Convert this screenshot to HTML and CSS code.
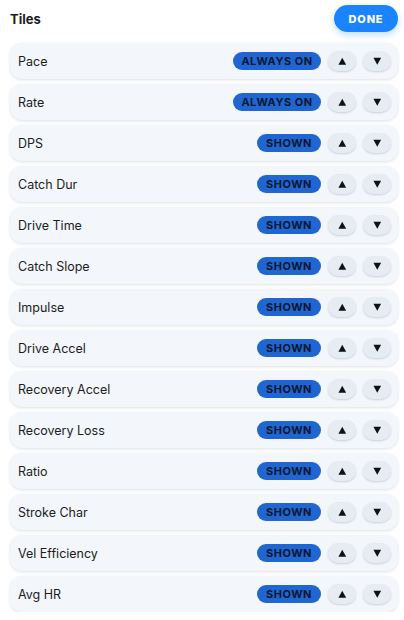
FILE: index.html
```html
<!DOCTYPE html>
<html>
<head>
<meta charset="utf-8">
<link rel="stylesheet" href="styles.css">
</head>
<body>
<div class="panel">
  <div class="header">
    <div class="title">Tiles</div>
    <button class="done">DONE</button>
  </div>
  <div class="list">
    <div class="row"><span class="name">Pace</span><span class="pill">ALWAYS ON</span><button class="btn"><svg viewBox="0 0 8 8" class="tri"><path d="M4 0.8L7.6 7.2H0.4Z"/></svg></button><button class="btn"><svg viewBox="0 0 8 8" class="tri"><path d="M0.4 0.8H7.6L4 7.2Z"/></svg></button></div>
    <div class="row"><span class="name">Rate</span><span class="pill">ALWAYS ON</span><button class="btn"><svg viewBox="0 0 8 8" class="tri"><path d="M4 0.8L7.6 7.2H0.4Z"/></svg></button><button class="btn"><svg viewBox="0 0 8 8" class="tri"><path d="M0.4 0.8H7.6L4 7.2Z"/></svg></button></div>
    <div class="row"><span class="name">DPS</span><span class="pill shown">SHOWN</span><button class="btn"><svg viewBox="0 0 8 8" class="tri"><path d="M4 0.8L7.6 7.2H0.4Z"/></svg></button><button class="btn"><svg viewBox="0 0 8 8" class="tri"><path d="M0.4 0.8H7.6L4 7.2Z"/></svg></button></div>
    <div class="row"><span class="name">Catch Dur</span><span class="pill shown">SHOWN</span><button class="btn"><svg viewBox="0 0 8 8" class="tri"><path d="M4 0.8L7.6 7.2H0.4Z"/></svg></button><button class="btn"><svg viewBox="0 0 8 8" class="tri"><path d="M0.4 0.8H7.6L4 7.2Z"/></svg></button></div>
    <div class="row"><span class="name">Drive Time</span><span class="pill shown">SHOWN</span><button class="btn"><svg viewBox="0 0 8 8" class="tri"><path d="M4 0.8L7.6 7.2H0.4Z"/></svg></button><button class="btn"><svg viewBox="0 0 8 8" class="tri"><path d="M0.4 0.8H7.6L4 7.2Z"/></svg></button></div>
    <div class="row"><span class="name">Catch Slope</span><span class="pill shown">SHOWN</span><button class="btn"><svg viewBox="0 0 8 8" class="tri"><path d="M4 0.8L7.6 7.2H0.4Z"/></svg></button><button class="btn"><svg viewBox="0 0 8 8" class="tri"><path d="M0.4 0.8H7.6L4 7.2Z"/></svg></button></div>
    <div class="row"><span class="name">Impulse</span><span class="pill shown">SHOWN</span><button class="btn"><svg viewBox="0 0 8 8" class="tri"><path d="M4 0.8L7.6 7.2H0.4Z"/></svg></button><button class="btn"><svg viewBox="0 0 8 8" class="tri"><path d="M0.4 0.8H7.6L4 7.2Z"/></svg></button></div>
    <div class="row"><span class="name">Drive Accel</span><span class="pill shown">SHOWN</span><button class="btn"><svg viewBox="0 0 8 8" class="tri"><path d="M4 0.8L7.6 7.2H0.4Z"/></svg></button><button class="btn"><svg viewBox="0 0 8 8" class="tri"><path d="M0.4 0.8H7.6L4 7.2Z"/></svg></button></div>
    <div class="row"><span class="name">Recovery Accel</span><span class="pill shown">SHOWN</span><button class="btn"><svg viewBox="0 0 8 8" class="tri"><path d="M4 0.8L7.6 7.2H0.4Z"/></svg></button><button class="btn"><svg viewBox="0 0 8 8" class="tri"><path d="M0.4 0.8H7.6L4 7.2Z"/></svg></button></div>
    <div class="row"><span class="name">Recovery Loss</span><span class="pill shown">SHOWN</span><button class="btn"><svg viewBox="0 0 8 8" class="tri"><path d="M4 0.8L7.6 7.2H0.4Z"/></svg></button><button class="btn"><svg viewBox="0 0 8 8" class="tri"><path d="M0.4 0.8H7.6L4 7.2Z"/></svg></button></div>
    <div class="row"><span class="name">Ratio</span><span class="pill shown">SHOWN</span><button class="btn"><svg viewBox="0 0 8 8" class="tri"><path d="M4 0.8L7.6 7.2H0.4Z"/></svg></button><button class="btn"><svg viewBox="0 0 8 8" class="tri"><path d="M0.4 0.8H7.6L4 7.2Z"/></svg></button></div>
    <div class="row"><span class="name">Stroke Char</span><span class="pill shown">SHOWN</span><button class="btn"><svg viewBox="0 0 8 8" class="tri"><path d="M4 0.8L7.6 7.2H0.4Z"/></svg></button><button class="btn"><svg viewBox="0 0 8 8" class="tri"><path d="M0.4 0.8H7.6L4 7.2Z"/></svg></button></div>
    <div class="row"><span class="name">Vel Efficiency</span><span class="pill shown">SHOWN</span><button class="btn"><svg viewBox="0 0 8 8" class="tri"><path d="M4 0.8L7.6 7.2H0.4Z"/></svg></button><button class="btn"><svg viewBox="0 0 8 8" class="tri"><path d="M0.4 0.8H7.6L4 7.2Z"/></svg></button></div>
    <div class="row"><span class="name">Avg HR</span><span class="pill shown">SHOWN</span><button class="btn"><svg viewBox="0 0 8 8" class="tri"><path d="M4 0.8L7.6 7.2H0.4Z"/></svg></button><button class="btn"><svg viewBox="0 0 8 8" class="tri"><path d="M0.4 0.8H7.6L4 7.2Z"/></svg></button></div>
  </div>
</div>
</body>
</html>
```
FILE: styles.css
```css
* { box-sizing: border-box; }
html, body { margin: 0; padding: 0; background: #ffffff; }
body {
  font-family: Inter, "Liberation Sans", sans-serif;
  color: #1c1d21;
}
.panel {
  padding: 5px 6px 0 10px;
}
.header {
  display: flex;
  align-items: center;
  justify-content: space-between;
  height: 27px;
  margin-bottom: 11px;
}
.title {
  font-size: 13px;
  font-weight: 700;
  color: #1c1d21;
  padding-top: 1px;
}
.done {
  width: 64px;
  height: 27px;
  border: none;
  border-radius: 14px;
  background: #1a84ff;
  color: #ffffff;
  font-family: Inter, "Liberation Sans", sans-serif;
  font-size: 11px;
  font-weight: 800;
  letter-spacing: 0.8px;
  padding: 0;
  box-shadow: 0 3px 7px rgba(26, 132, 255, 0.28);
}
.list {
  display: flex;
  flex-direction: column;
  gap: 5px;
}
.row {
  display: flex;
  align-items: center;
  height: 36px;
  padding: 0 7px 0 8px;
  background: #f3f6fb;
  border-radius: 12px;
  box-shadow: 0 1px 3px rgba(20, 40, 80, 0.14);
}
.name {
  flex: 1;
  font-size: 12.5px;
  color: #1c1d21;
}
.pill {
  width: 88px;
  height: 18px;
  border-radius: 9px;
  background: #1f66d1;
  color: #0b1630;
  font-size: 11px;
  font-weight: 700;
  letter-spacing: 0.5px;
  display: flex;
  align-items: center;
  justify-content: center;
  margin-right: 7px;
}
.pill.shown { width: 64px; }
.btn {
  width: 28px;
  height: 20px;
  border: none;
  border-radius: 10px;
  background: #e7ecf3;
  box-shadow: 0 1px 2px rgba(20, 40, 80, 0.18);
  padding: 0;
  display: flex;
  align-items: center;
  justify-content: center;
}
.btn + .btn { margin-left: 7px; }
.tri {
  width: 8.5px;
  height: 8.5px;
  fill: #0e1117;
}
```
